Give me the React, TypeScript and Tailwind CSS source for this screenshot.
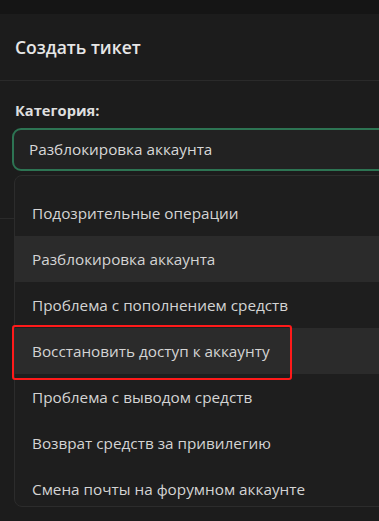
import { useState } from 'react'

const categories = [
    'Подозрительные операции',
    'Разблокировка аккаунта',
    'Проблема с пополнением средств',
    'Восстановить доступ к аккаунту',
    'Проблема с выводом средств',
    'Возврат средств за привилегию',
    'Смена почты на форумном аккаунте',
]

export default function App() {
    const [selected] = useState('Разблокировка аккаунта')
    const highlighted = 'Восстановить доступ к аккаунту'

    return (
        <div
            className="w-[379px] h-[521px] overflow-hidden bg-[#161616] flex flex-col"
            style={{ fontFamily: '"Open Sans", "Noto Sans", sans-serif' }}
        >
            <div className="h-[14px] shrink-0 bg-[#151515]" />
            <div className="flex-1 w-[480px] bg-[#1c1c1c] flex flex-col">
                <div className="h-[67px] shrink-0 flex items-center px-[15px] border-b border-[#2a2a2a]">
                    <h2 className="text-[17.5px] font-semibold text-[#e6e6e6]">Создать тикет</h2>
                </div>
                <div className="relative pt-[18px]">
                    <p className="px-[15px] text-[14.7px] font-bold text-[#dedede] leading-[22px]">Категория:</p>
                    <div className="mt-[7px] ml-[12px] h-[43px] rounded-[9px] border-2 border-[#2d7453] bg-[#222222] flex items-center px-[15px]">
                        <span className="text-[15.3px] text-[#d8d8d8]">{selected}</span>
                    </div>
                    <div className="mt-[47px] border-t border-[#2a2a2a]" />

                    <div className="absolute left-[14px] top-[94px] w-[440px] h-[332px] overflow-hidden rounded-[8px] border border-[#2c2c2c] bg-[#1e1e1e] pt-[14px]">
                        {categories.map((c) => (
                            <div
                                key={c}
                                className={
                                    'h-[46px] flex items-center px-[17px] text-[15.3px] text-[#d4d4d4] ' +
                                    (c === selected || c === highlighted ? 'bg-[#2b2b2b]' : '')
                                }
                            >
                                {c}
                            </div>
                        ))}
                    </div>

                    <div className="absolute left-[12px] top-[244px] w-[280px] h-[55px] rounded-[3px] border-[2.5px] border-[#ff1a1a]" />
                </div>
            </div>
        </div>
    )
}
